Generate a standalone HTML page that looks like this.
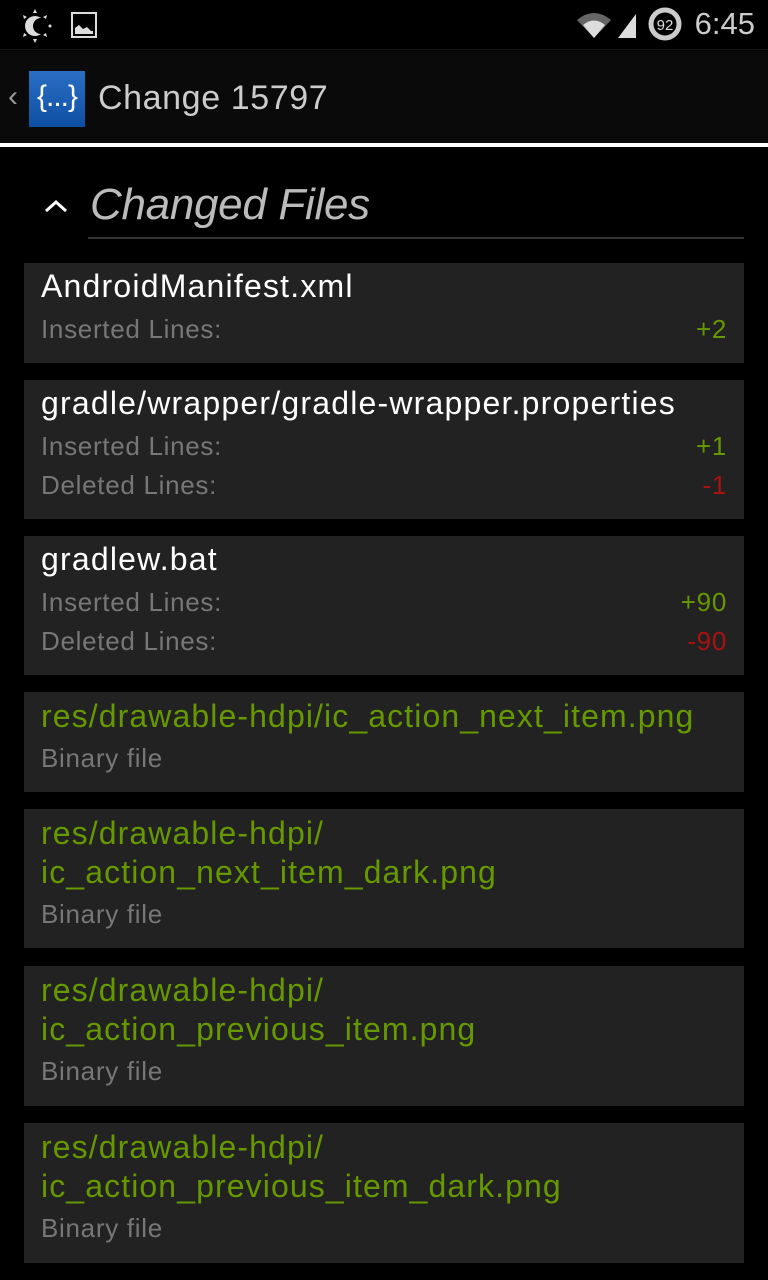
<!DOCTYPE html>
<html><head><meta charset="utf-8"><style>
*{margin:0;padding:0;box-sizing:border-box}
body{width:768px;height:1280px;background:#000;font-family:"Liberation Sans",sans-serif;overflow:hidden;position:relative}
.sb{position:absolute;top:0;left:0;width:768px;height:50px;background:#000;border-bottom:1px solid #161616}
.ab{position:absolute;top:51px;left:0;width:768px;height:92px;background:#0a0a0a}
.line{position:absolute;top:143px;left:0;width:768px;height:4px;background:#fff}
.time{position:absolute;right:13px;top:6px;color:#ccc;font-size:31px}
.title{position:absolute;left:98px;top:79px;color:#ccc;font-size:34px;letter-spacing:0.6px}
.logo{position:absolute;left:29px;top:71px;width:56px;height:56px;background:linear-gradient(#2a6fc4,#0d4fa3);color:#fff;font-size:30px;text-align:center;line-height:52px;letter-spacing:-1px}
.hdr{position:absolute;left:90px;top:180px;color:#bbb;font-size:44px;font-style:italic;font-weight:300;letter-spacing:-0.3px}
.hl{position:absolute;left:88px;top:237px;width:656px;height:2px;background:#333}
.card{position:absolute;left:24px;width:720px;background:#222;padding:4px 17px 0}
.card div{line-height:39px;font-size:26px;color:#777;display:flex;justify-content:space-between;letter-spacing:0.7px;position:relative;top:4px}
.card .t{font-size:32px;color:#fff;letter-spacing:1.2px;top:0}
.card .g{font-size:32px;color:#669900;letter-spacing:1.1px;top:1px}
.p{color:#669900}.m{color:#aa1111}
</style></head><body>
<div class="sb">
<svg style="position:absolute;left:17px;top:8px" width="36" height="36" viewBox="0 0 36 36"><circle cx="18" cy="18" r="10" fill="#ddd"/><circle cx="24" cy="18" r="8" fill="#000"/><g fill="#ddd"><polygon points="18,1 20,5 16,5"/><polygon points="18,35 20,31 16,31"/><polygon points="30,7 29,11 26,9"/><polygon points="30,29 29,25 26,27"/><circle cx="33" cy="18" r="1.5"/><polygon points="6,7 7,11 10,9"/><polygon points="6,29 7,25 10,27"/></g></svg>
<svg style="position:absolute;left:71px;top:12px" width="26" height="26" viewBox="0 0 26 26"><rect x="1" y="1" width="24" height="24" fill="none" stroke="#ddd" stroke-width="2"/><path d="M4 22 L4 16 L8 13 L12 17 L16 15 L20 19 L22 19 L22 22Z" fill="#ddd"/></svg>
<svg style="position:absolute;left:574px;top:10px" width="64" height="30" viewBox="0 0 64 30"><path d="M3 10 Q20 -4 37 10 L20 28Z" fill="#666"/><path d="M9 15 Q20 6 31 15 L20 28Z" fill="#ddd"/><path d="M44 28 L62 4 L62 28Z" fill="#ddd"/></svg>
<svg style="position:absolute;left:647px;top:6px" width="36" height="36" viewBox="0 0 36 36"><circle cx="18" cy="18" r="14" fill="none" stroke="#ccc" stroke-width="5"/><text x="18" y="24" font-size="15" fill="#ddd" text-anchor="middle" font-family="Liberation Sans">92</text></svg>
<div class="time">6:45</div>
</div>
<div class="ab"></div>
<div style="position:absolute;left:8px;top:80px;color:#999;font-size:30px">‹</div>
<div class="logo">{...}</div>
<div class="title">Change 15797</div>
<div class="line"></div>
<svg style="position:absolute;left:43px;top:198px" width="26" height="16" viewBox="0 0 26 16"><path d="M3 13 L13 4 L23 13" fill="none" stroke="#fff" stroke-width="3"/></svg>
<div class="hdr">Changed Files</div>
<div class="hl"></div>

<div class="card" style="top:263px;height:100px"><div class="t">AndroidManifest.xml</div><div><span>Inserted Lines:</span><span class="p">+2</span></div></div>
<div class="card" style="top:380px;height:139px"><div class="t">gradle/wrapper/gradle-wrapper.properties</div><div><span>Inserted Lines:</span><span class="p">+1</span></div><div><span>Deleted Lines:</span><span class="m">-1</span></div></div>
<div class="card" style="top:536px;height:139px"><div class="t">gradlew.bat</div><div><span>Inserted Lines:</span><span class="p">+90</span></div><div><span>Deleted Lines:</span><span class="m">-90</span></div></div>
<div class="card" style="top:692px;height:100px"><div class="g">res/drawable-hdpi/ic_action_next_item.png</div><div>Binary file</div></div>
<div class="card" style="top:809px;height:139px"><div class="g">res/drawable-hdpi/</div><div class="g">ic_action_next_item_dark.png</div><div>Binary file</div></div>
<div class="card" style="top:966px;height:140px"><div class="g">res/drawable-hdpi/</div><div class="g">ic_action_previous_item.png</div><div>Binary file</div></div>
<div class="card" style="top:1123px;height:140px"><div class="g">res/drawable-hdpi/</div><div class="g">ic_action_previous_item_dark.png</div><div>Binary file</div></div>
</body></html>
